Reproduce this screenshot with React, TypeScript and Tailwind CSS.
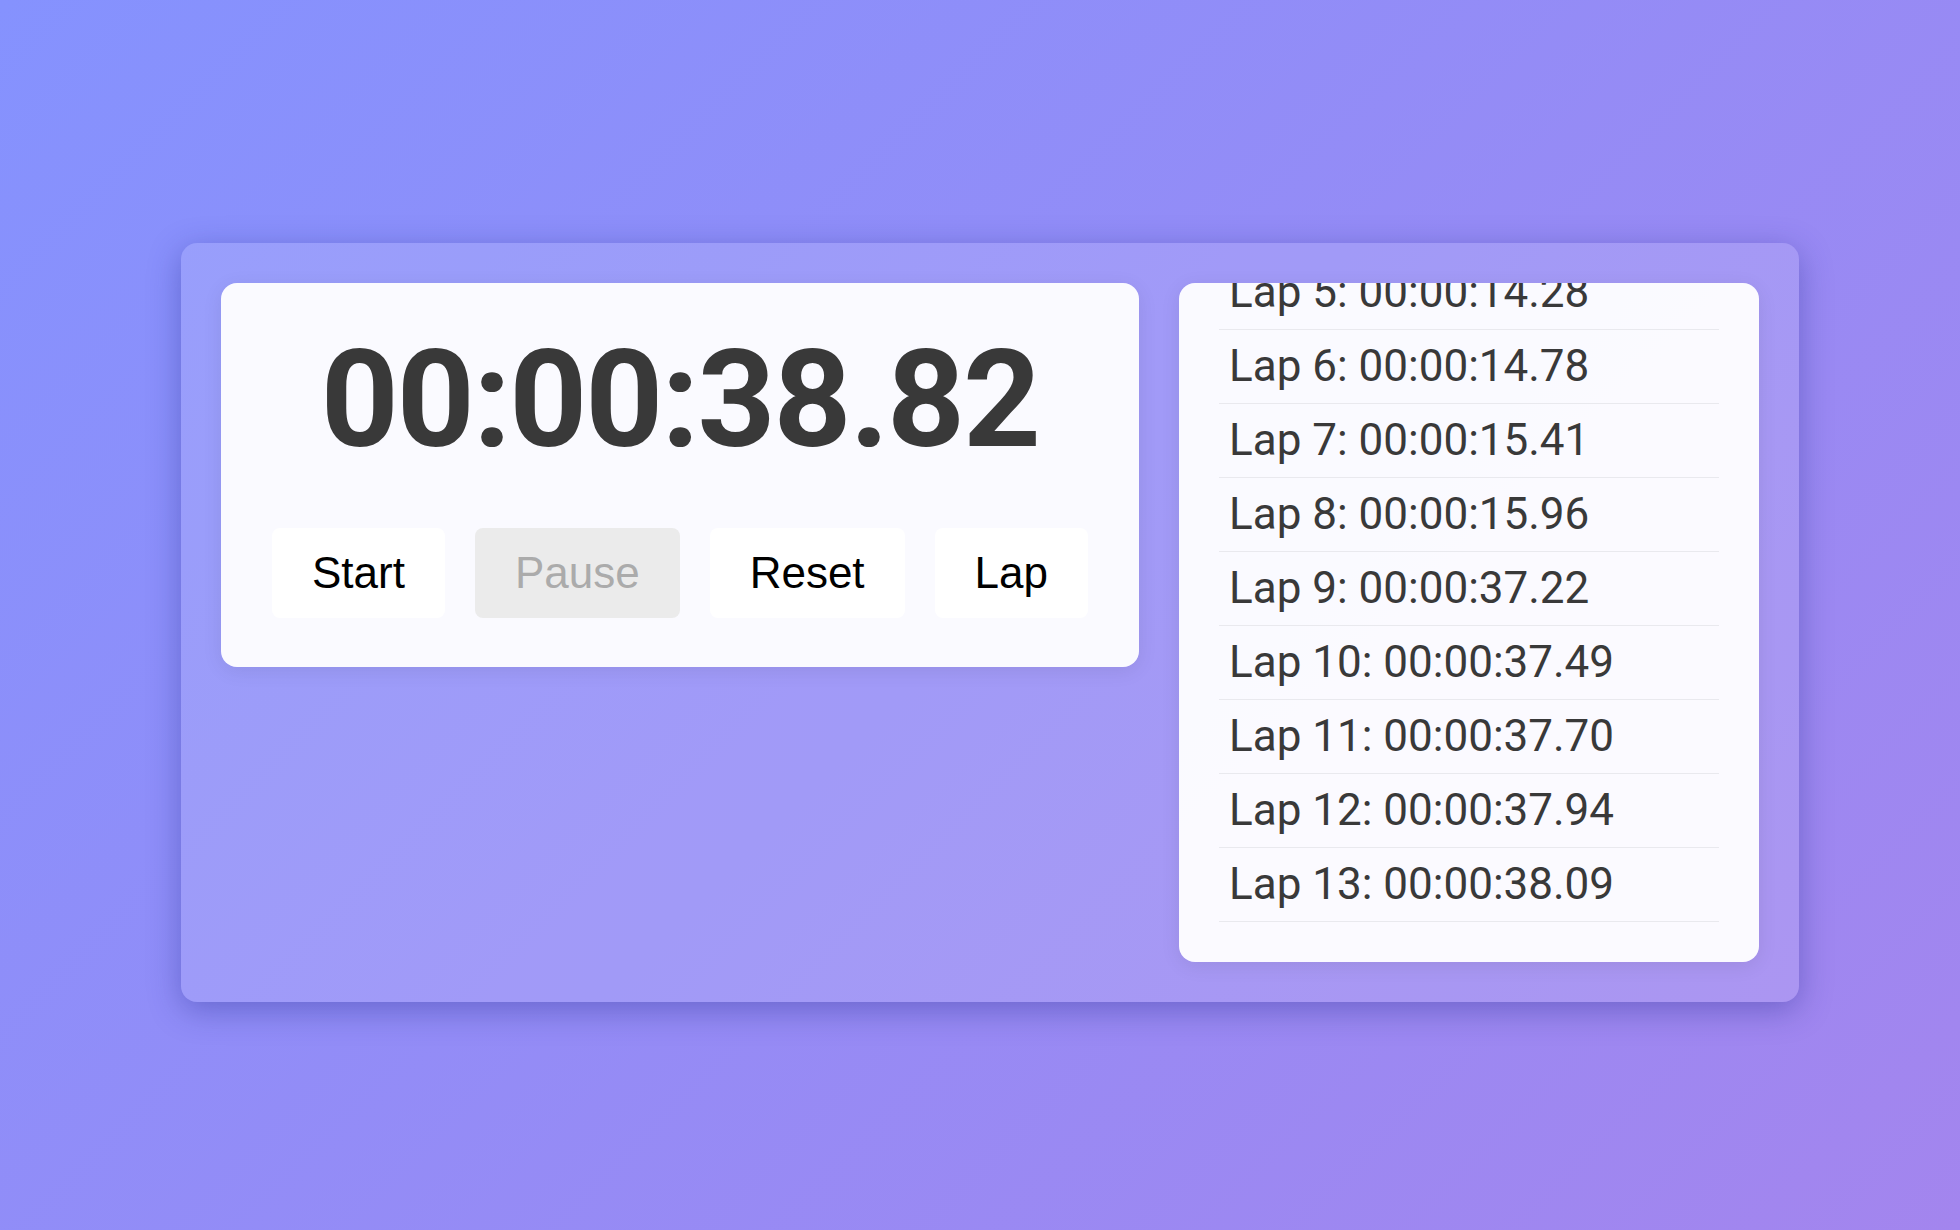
import React from "react";

const laps = [
  { n: 5, t: "00:00:14.28" },
  { n: 6, t: "00:00:14.78" },
  { n: 7, t: "00:00:15.41" },
  { n: 8, t: "00:00:15.96" },
  { n: 9, t: "00:00:37.22" },
  { n: 10, t: "00:00:37.49" },
  { n: 11, t: "00:00:37.70" },
  { n: 12, t: "00:00:37.94" },
  { n: 13, t: "00:00:38.09" },
];

const buttons = [
  { label: "Start", disabled: false },
  { label: "Pause", disabled: true },
  { label: "Reset", disabled: false },
  { label: "Lap", disabled: false },
];

export default function App() {
  return (
    <div className="h-[1230px] w-full overflow-hidden bg-[linear-gradient(135deg,#8592fe_0%,#a385ee_100%)] pt-[243px] pl-[181px]">
      <div className="flex w-[1618px] items-start gap-[40px] rounded-[16px] bg-[rgba(255,255,255,0.13)] p-[40px] shadow-[0_8px_32px_rgba(31,38,135,0.37)]">
        {/* Timer card */}
        <div className="flex flex-1 flex-col items-center rounded-[16px] bg-[rgba(255,255,255,0.95)] pt-[37px] pb-[49px] shadow-[0_4px_20px_rgba(0,0,0,0.08)]">
          <div className="font-['Roboto',sans-serif] text-[136px] font-bold leading-[160px] tracking-[-2px] text-[#393939]">
            00:00:38.82
          </div>
          <div className="mt-[48px] flex gap-[30px]">
            {buttons.map((b) => (
              <button
                key={b.label}
                disabled={b.disabled}
                className={
                  b.disabled
                    ? "rounded-[8px] bg-[#ebebeb] px-[40px] py-[20px] font-['Liberation_Sans',Arial,sans-serif] text-[44px] leading-[50px] text-[#ababab]"
                    : "rounded-[8px] bg-white px-[40px] py-[20px] font-['Liberation_Sans',Arial,sans-serif] text-[44px] leading-[50px] text-black"
                }
              >
                {b.label}
              </button>
            ))}
          </div>
        </div>

        {/* Laps card */}
        <div className="flex h-[679px] w-[580px] shrink-0 flex-col justify-end overflow-hidden rounded-[16px] bg-[rgba(255,255,255,0.95)] px-[40px] pb-[40px] shadow-[0_4px_20px_rgba(0,0,0,0.08)]">
          <ul className="flex shrink-0 flex-col">
            {laps.map((l) => (
              <li
                key={l.n}
                className="border-b border-[#e9e9ee] px-[10px] py-[10px] font-['Roboto',sans-serif] text-[44px] leading-[53px] text-[#393939]"
              >
                Lap {l.n}: {l.t}
              </li>
            ))}
          </ul>
        </div>
      </div>
    </div>
  );
}
